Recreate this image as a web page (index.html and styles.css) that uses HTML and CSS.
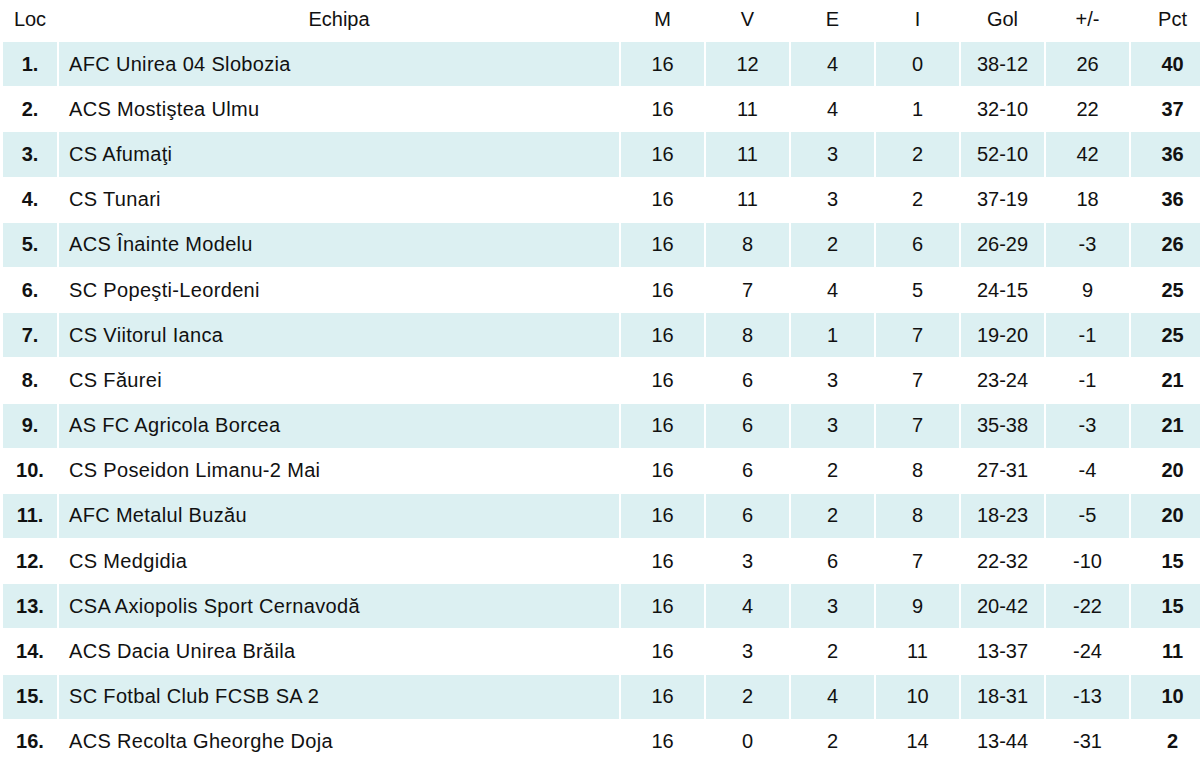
FILE: index.html
```html
<!DOCTYPE html>
<html lang="ro">
<head>
<meta charset="utf-8">
<title>Clasament</title>
<link rel="stylesheet" href="styles.css">
</head>
<body>
<table class="standings">
  <colgroup>
    <col class="c-loc">
    <col class="c-team">
    <col class="c-num">
    <col class="c-num">
    <col class="c-num">
    <col class="c-num">
    <col class="c-num">
    <col class="c-num">
    <col class="c-num">
  </colgroup>
  <thead>
    <tr><th>Loc</th><th>Echipa</th><th>M</th><th>V</th><th>E</th><th>I</th><th>Gol</th><th>+/-</th><th>Pct</th></tr>
  </thead>
  <tbody>
    <tr class="alt"><td class="pos">1.</td><td class="team">AFC Unirea 04 Slobozia</td><td>16</td><td>12</td><td>4</td><td>0</td><td>38-12</td><td>26</td><td class="pts">40</td></tr>
    <tr><td class="pos">2.</td><td class="team">ACS Mostiştea Ulmu</td><td>16</td><td>11</td><td>4</td><td>1</td><td>32-10</td><td>22</td><td class="pts">37</td></tr>
    <tr class="alt"><td class="pos">3.</td><td class="team">CS Afumaţi</td><td>16</td><td>11</td><td>3</td><td>2</td><td>52-10</td><td>42</td><td class="pts">36</td></tr>
    <tr><td class="pos">4.</td><td class="team">CS Tunari</td><td>16</td><td>11</td><td>3</td><td>2</td><td>37-19</td><td>18</td><td class="pts">36</td></tr>
    <tr class="alt"><td class="pos">5.</td><td class="team">ACS Înainte Modelu</td><td>16</td><td>8</td><td>2</td><td>6</td><td>26-29</td><td>-3</td><td class="pts">26</td></tr>
    <tr><td class="pos">6.</td><td class="team">SC Popeşti-Leordeni</td><td>16</td><td>7</td><td>4</td><td>5</td><td>24-15</td><td>9</td><td class="pts">25</td></tr>
    <tr class="alt"><td class="pos">7.</td><td class="team">CS Viitorul Ianca</td><td>16</td><td>8</td><td>1</td><td>7</td><td>19-20</td><td>-1</td><td class="pts">25</td></tr>
    <tr><td class="pos">8.</td><td class="team">CS Făurei</td><td>16</td><td>6</td><td>3</td><td>7</td><td>23-24</td><td>-1</td><td class="pts">21</td></tr>
    <tr class="alt"><td class="pos">9.</td><td class="team">AS FC Agricola Borcea</td><td>16</td><td>6</td><td>3</td><td>7</td><td>35-38</td><td>-3</td><td class="pts">21</td></tr>
    <tr><td class="pos">10.</td><td class="team">CS Poseidon Limanu-2 Mai</td><td>16</td><td>6</td><td>2</td><td>8</td><td>27-31</td><td>-4</td><td class="pts">20</td></tr>
    <tr class="alt"><td class="pos">11.</td><td class="team">AFC Metalul Buzău</td><td>16</td><td>6</td><td>2</td><td>8</td><td>18-23</td><td>-5</td><td class="pts">20</td></tr>
    <tr><td class="pos">12.</td><td class="team">CS Medgidia</td><td>16</td><td>3</td><td>6</td><td>7</td><td>22-32</td><td>-10</td><td class="pts">15</td></tr>
    <tr class="alt"><td class="pos">13.</td><td class="team">CSA Axiopolis Sport Cernavodă</td><td>16</td><td>4</td><td>3</td><td>9</td><td>20-42</td><td>-22</td><td class="pts">15</td></tr>
    <tr><td class="pos">14.</td><td class="team">ACS Dacia Unirea Brăila</td><td>16</td><td>3</td><td>2</td><td>11</td><td>13-37</td><td>-24</td><td class="pts">11</td></tr>
    <tr class="alt"><td class="pos">15.</td><td class="team">SC Fotbal Club FCSB SA 2</td><td>16</td><td>2</td><td>4</td><td>10</td><td>18-31</td><td>-13</td><td class="pts">10</td></tr>
    <tr><td class="pos">16.</td><td class="team">ACS Recolta Gheorghe Doja</td><td>16</td><td>0</td><td>2</td><td>14</td><td>13-44</td><td>-31</td><td class="pts">2</td></tr>
  </tbody>
</table>
</body>
</html>
```

FILE: styles.css
```css
html {
  overflow: hidden;
}

body {
  margin: 0;
  background: #ffffff;
  font-family: "Liberation Sans", Arial, sans-serif;
  font-size: 20px;
  color: #111111;
}

.standings {
  margin-left: 1px;
  width: 1215px;
  table-layout: fixed;
  border-collapse: separate;
  border-spacing: 2px 1px;
}

.c-loc { width: 54px; }
.c-team { width: 560px; }
.c-num { width: 83px; }

.standings th {
  box-sizing: border-box;
  height: 40px;
  padding: 0 0 4px;
  font-weight: normal;
  text-align: center;
  vertical-align: middle;
  white-space: nowrap;
}

.standings td {
  box-sizing: border-box;
  height: 44.2px;
  padding: 0;
  text-align: center;
  vertical-align: middle;
  white-space: nowrap;
}

.standings tr.alt td {
  background: #dcf0f2;
}

.standings td.team {
  text-align: left;
  padding-left: 10px;
  letter-spacing: 0.33px;
}

.standings td.pos,
.standings td.pts {
  font-weight: bold;
}
```
